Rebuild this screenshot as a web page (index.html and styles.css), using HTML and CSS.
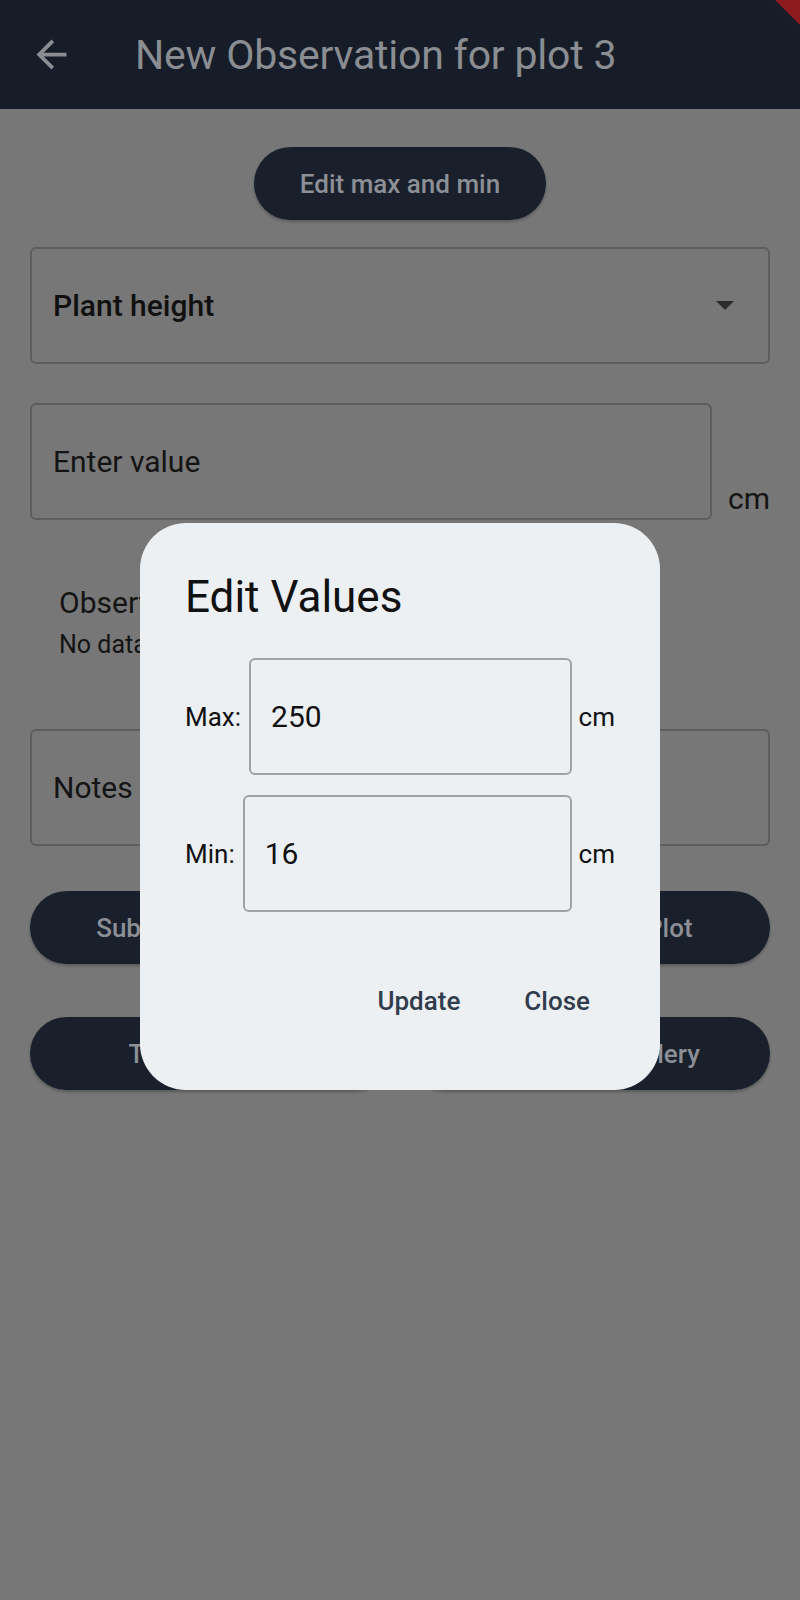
FILE: index.html
```html
<!DOCTYPE html>
<html>
<head>
<meta charset="utf-8">
<link rel="stylesheet" href="styles.css">
</head>
<body>
<div class="screen">
  <header class="appbar">
    <svg class="back" viewBox="0 0 24 24" width="45" height="45"><path d="M20 11H7.83l5.59-5.59L12 4l-8 8 8 8 1.41-1.41L7.83 13H20v-2z" fill="currentColor"/></svg>
    <h1 class="title">New Observation for plot 3</h1>
    <div class="debug-banner"></div>
  </header>
  <main class="content">
    <div class="center-row"><button class="pill edit-btn">Edit max and min</button></div>
    <div class="field dropdown">
      <span class="dropdown-text">Plant height</span>
      <svg class="caret" viewBox="0 0 10 5" width="18" height="9"><path d="M0 0h10L5 5z" fill="currentColor"/></svg>
    </div>
    <div class="value-row">
      <div class="field value-field"><span class="placeholder">Enter value</span></div>
      <span class="unit">cm</span>
    </div>
    <div class="obs">
      <div class="obs-title">Observations</div>
      <div class="obs-text">No data yet</div>
    </div>
    <div class="field notes"><span class="placeholder">Notes</span></div>
    <div class="btn-row">
      <button class="pill wide">Submit Observation</button>
      <button class="pill wide">Move to Next Plot</button>
    </div>
    <div class="btn-row second">
      <button class="pill wide">Take a Picture</button>
      <button class="pill wide">Select from Gallery</button>
    </div>
  </main>

  <div class="dialog">
    <h2 class="dialog-title">Edit Values</h2>
    <div class="dlg-row first">
      <span class="dlg-label">Max:</span>
      <div class="dlg-input">250</div>
      <span class="dlg-unit">cm</span>
    </div>
    <div class="dlg-row">
      <span class="dlg-label">Min:</span>
      <div class="dlg-input">16</div>
      <span class="dlg-unit">cm</span>
    </div>
    <div class="dlg-actions">
      <button class="text-btn">Update</button>
      <button class="text-btn">Close</button>
    </div>
  </div>
</div>
</body>
</html>
```
FILE: styles.css
```css
* { box-sizing: border-box; }
html, body { margin: 0; padding: 0; }
body {
  width: 800px;
  height: 1600px;
  background: #777777;
  font-family: Roboto, "Liberation Sans", sans-serif;
  overflow: hidden;
}
.screen { position: relative; width: 800px; height: 1600px; background: #777777; }

.appbar {
  position: relative;
  height: 109px;
  background: #171d28;
  display: flex;
  align-items: center;
  padding-left: 29px;
  overflow: hidden;
}
.back { color: #8a8d92; flex: none; }
.title {
  margin: 0 0 0 61px;
  font-size: 41px;
  font-weight: 400;
  color: #8a8d92;
  letter-spacing: -0.2px;
}
.debug-banner {
  position: absolute;
  right: 0;
  top: 0;
  width: 25px;
  height: 25px;
  background: #8e1c1f;
  clip-path: polygon(0 0, 100% 0, 100% 100%);
}

.content { padding: 38px 30px 0; }
.center-row { display: flex; justify-content: center; }
.pill {
  border: none;
  background: #19202b;
  color: #8c8f95;
  font-family: Roboto, "Liberation Sans", sans-serif;
  font-weight: 500;
  font-size: 26px;
  border-radius: 37px;
  height: 73px;
  box-shadow: 0 2px 3px rgba(0,0,0,0.25);
  white-space: nowrap;
}
.edit-btn { width: 292px; }

.field {
  border: 2px solid #5d5d5d;
  border-radius: 6px;
  height: 117px;
  display: flex;
  align-items: center;
  padding-left: 21px;
}
.dropdown { margin-top: 27px; padding-right: 34px; justify-content: space-between; }
.dropdown-text { font-size: 30px; font-weight: 500; color: #101010; }
.caret { color: #2c2c2c; }

.value-row { display: flex; align-items: flex-end; margin-top: 39px; gap: 16px; }
.value-field { width: 682px; }
.placeholder { font-size: 30px; color: #141414; }
.unit { font-size: 30px; color: #141414; padding-bottom: 4px; }

.obs { padding: 66px 0 0 29px; height: 209px; }
.obs-title { font-size: 30px; color: #141414; line-height: 34px; }
.obs-text { font-size: 25px; color: #141414; line-height: 30px; margin-top: 10px; }

.btn-row { display: flex; gap: 16px; margin-top: 45px; }
.btn-row.second { margin-top: 53px; }
.wide { flex: 1; }

.dialog {
  position: absolute;
  left: 140px;
  top: 523px;
  width: 520px;
  height: 567px;
  background: #ecf0f3;
  border-radius: 46px;
  padding: 42px 45px 0 45px;
}
.dialog-title {
  margin: 0;
  font-size: 44px;
  font-weight: 400;
  color: #111;
  line-height: 64px;
}
.dlg-row {
  display: flex;
  align-items: center;
  gap: 8px;
  margin-top: 20px;
}
.dlg-row.first { margin-top: 29px; }
.dlg-label { font-size: 26px; color: #111; }
.dlg-input {
  flex: 1;
  height: 117px;
  border: 2px solid #9fa3a8;
  border-radius: 6px;
  display: flex;
  align-items: center;
  padding-left: 20px;
  font-size: 30px;
  color: #111;
}
.dlg-unit { font-size: 26px; color: #111; margin-left: -1px; }
.dlg-actions {
  display: flex;
  justify-content: flex-end;
  gap: 32px;
  margin-top: 64px;
  padding-right: 9px;
}
.text-btn {
  border: none;
  background: transparent;
  font-family: Roboto, "Liberation Sans", sans-serif;
  font-size: 26px;
  font-weight: 500;
  color: #313c4c;
  padding: 10px 16px;
}
```
